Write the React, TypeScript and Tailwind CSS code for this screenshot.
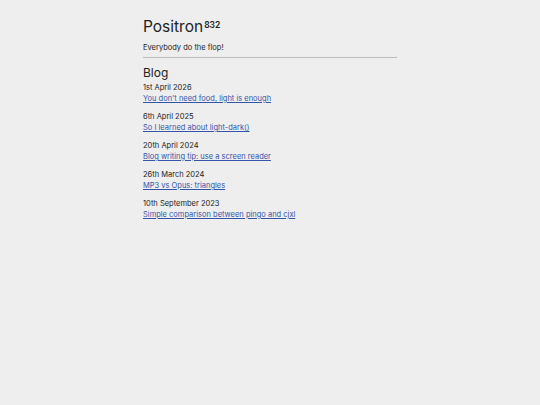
export default function App() {
  const posts = [
    ["1st April 2026", "You don't need food, light is enough"],
    ["6th April 2025", "So I learned about light-dark()"],
    ["20th April 2024", "Blog writing tip: use a screen reader"],
    ["26th March 2024", "MP3 vs Opus: triangles"],
    ["10th September 2023", "Simple comparison between pingo and cjxl"],
  ];
  return (
    <div className="min-h-[405px] bg-[#eeeeee] text-[#222222]" style={{ fontFamily: "Inter, 'Liberation Sans', sans-serif" }}>
      <div className="mx-auto w-[254px] pt-[17px]">
        <h1 className="text-[15.5px] leading-[20px] font-normal">
          Positron<sup className="ml-[1px] text-[8.5px] font-semibold">832</sup>
        </h1>
        <p className="mt-[5px] text-[7.5px] leading-[11px]">Everybody do the flop!</p>
        <hr className="mt-[4px] border-t-[1.5px] border-[#bbbbbb]" />
        <h2 className="mt-[7px] text-[12px] leading-[15px]">Blog</h2>
        <div className="mt-[2px] flex flex-col gap-[7px]">
          {posts.map(([d, t]) => (
            <div key={t} className="text-[7.5px] leading-[11px]">
              <div>{d}</div>
              <a href="#" className="text-[#3555a8] underline">{t}</a>
            </div>
          ))}
        </div>
      </div>
    </div>
  );
}
